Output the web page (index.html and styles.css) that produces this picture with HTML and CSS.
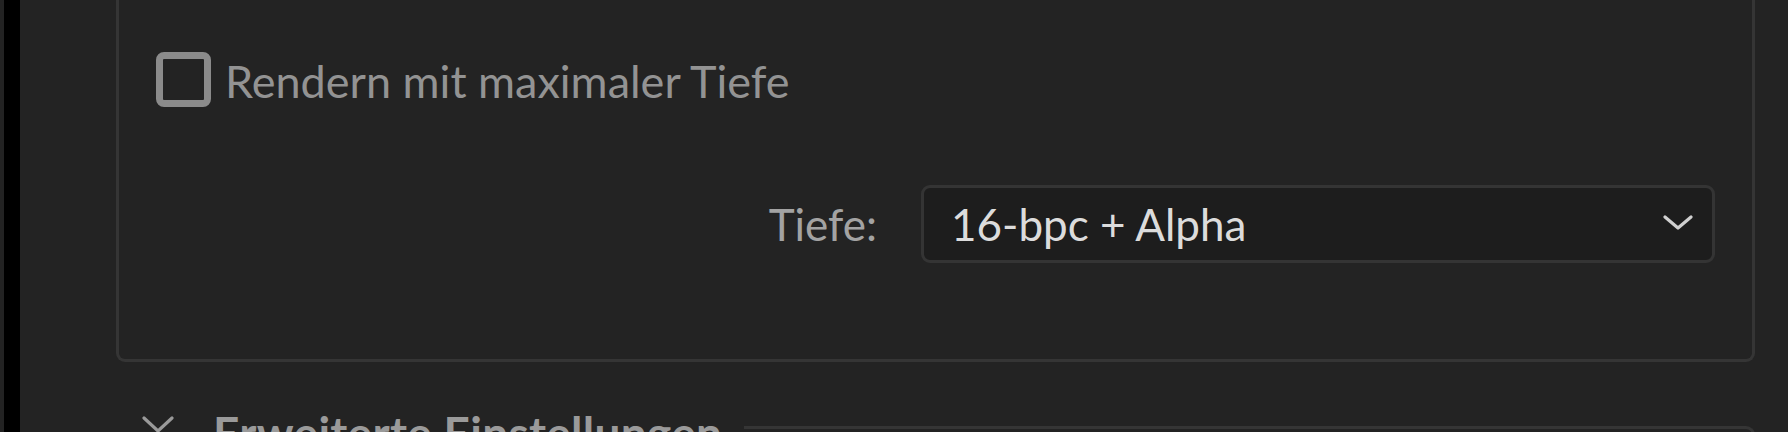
FILE: index.html
```html
<!DOCTYPE html>
<html lang="de">
<head>
<meta charset="utf-8">
<title>Tiefe</title>
<link rel="stylesheet" href="styles.css">
</head>
<body>
<div class="app">
  <div class="edge"></div>
  <div class="main">
    <div class="panel">
      <label class="check-row">
        <span class="checkbox"></span>
        <span class="check-label">Rendern mit maximaler Tiefe</span>
      </label>
      <div class="field-row">
        <span class="field-label">Tiefe:</span>
        <div class="select">
          <span class="select-value">16-bpc + Alpha</span>
          <svg class="select-chevron" width="30" height="16" viewBox="0 0 30 16"><path d="M2 2 L15 13 L28 2" fill="none" stroke="#d0d0d0" stroke-width="3.2" stroke-linecap="round" stroke-linejoin="round"/></svg>
        </div>
      </div>
    </div>
    <div class="section-head">
      <svg class="section-chevron" width="32" height="18" viewBox="0 0 32 18"><path d="M2 2 L16 15 L30 2" fill="none" stroke="#9a9a9a" stroke-width="3.2" stroke-linecap="round" stroke-linejoin="round"/></svg>
      <span class="section-title">Erweiterte Einstellungen</span>
      <div class="section-rule"></div>
    </div>
  </div>
</div>
</body>
</html>
```

FILE: styles.css
```css
html, body {
  margin: 0;
  padding: 0;
  background: #232323;
  height: 432px;
  overflow: hidden;
}

.app {
  display: flex;
  height: 432px;
  font-family: "Lato", "Open Sans", sans-serif;
}

.edge {
  width: 16px;
  margin-left: 4px;
  background: #000;
  flex: none;
}

.main {
  flex: 1;
  padding-left: 96px;
  padding-right: 33px;
  display: flex;
  flex-direction: column;
}

.panel {
  flex: none;
  height: 362px;
  box-sizing: border-box;
  border: 3px solid #353535;
  border-top: none;
  border-radius: 0 0 9px 9px;
  padding: 52px 37px 0 37px;
  display: flex;
  flex-direction: column;
}

.check-row {
  display: flex;
  align-items: center;
  height: 55px;
}

.checkbox {
  width: 55px;
  height: 55px;
  box-sizing: border-box;
  border: 7px solid #8b8b8b;
  border-radius: 8px;
  flex: none;
}

.check-label {
  margin-left: 14px;
  font-size: 45px;
  color: #939393;
  line-height: 1;
  margin-top: 3px;
}

.field-row {
  margin-top: 78px;
  display: flex;
  justify-content: flex-end;
  align-items: center;
}

.field-label {
  font-size: 44px;
  color: #a3a3a3;
  line-height: 1;
  margin-right: 44px;
}

.select {
  width: 794px;
  height: 78px;
  box-sizing: border-box;
  border: 3px solid #343434;
  border-radius: 9px;
  background: #1d1d1d;
  display: flex;
  align-items: center;
  padding-left: 27px;
  padding-right: 19px;
}

.select-value {
  flex: 1;
  font-size: 44px;
  color: #dcdcdc;
  line-height: 1;
}

.select-chevron {
  flex: none;
  margin-top: -3px;
}

.section-head {
  flex: none;
  display: flex;
  align-items: flex-start;
  margin-top: 52px;
  padding-left: 26px;
}

.section-chevron {
  flex: none;
  margin-top: 2px;
}

.section-title {
  margin-left: 39px;
  font-size: 46px;
  letter-spacing: 0.3px;
  font-weight: 700;
  color: #9a9a9a;
  line-height: 1;
  margin-top: -4px;
}

.section-rule {
  flex: 1;
  margin-left: 22px;
  margin-top: 12px;
  height: 40px;
  border-top: 3px solid #353535;
  border-right: 3px solid #353535;
  border-radius: 0 9px 0 0;
}
```
